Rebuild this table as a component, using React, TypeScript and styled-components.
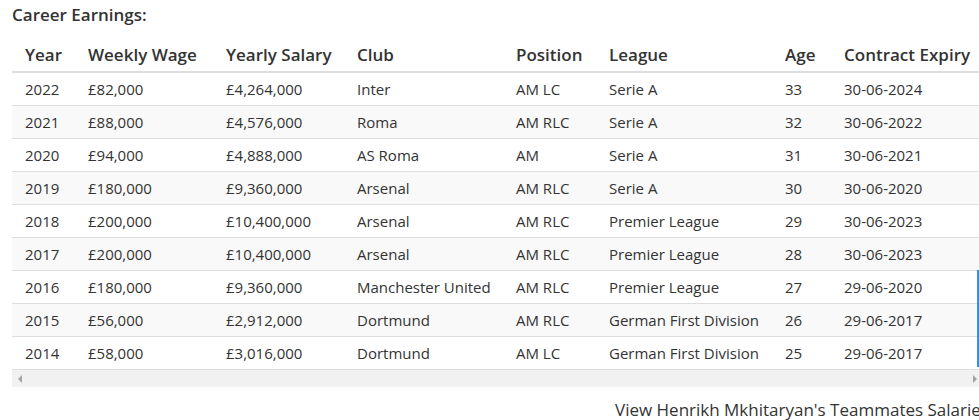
import React from "react";
import styled, { createGlobalStyle } from "styled-components";

const Global = createGlobalStyle`
  html, body { margin: 0; padding: 0; background: #fff; overflow: hidden; }
  body { font-family: "Open Sans", "Noto Sans", sans-serif; color: #333; }
`;

const Page = styled.div`
  width: 979px;
  height: 420px;
  overflow: hidden;
  padding-left: 12px;
  box-sizing: border-box;
`;

const Title = styled.h4`
  margin: 0;
  padding-top: 4px;
  font-size: 17px;
  font-weight: 600;
  line-height: 22px;
  color: #333;
`;

const ScrollArea = styled.div`
  position: relative;
  margin-top: 11px;
  width: 980px;
  overflow: hidden;
`;

const Table = styled.table`
  border-collapse: collapse;
  table-layout: fixed;
  width: 969px;
`;

const HeadCell = styled.th`
  text-align: left;
  font-size: 17px;
  font-weight: 600;
  height: 34px;
  padding: 0 0 0 13px;
  border-bottom: 2px solid #ddd;
  white-space: nowrap;
  vertical-align: middle;
`;

const Row = styled.tr<{ $striped: boolean }>`
  background: ${(p) => (p.$striped ? "#f9f9f9" : "#fff")};
`;

const Cell = styled.td`
  font-size: 15px;
  height: 32px;
  padding: 0 0 0 13px;
  border-bottom: 1px solid #ddd;
  white-space: nowrap;
  vertical-align: middle;
`;

const Scrollbar = styled.div`
  display: flex;
  justify-content: space-between;
  align-items: center;
  height: 17px;
  width: 968px;
  background: #f1f1f1;
  padding: 0 3px 0 6px;
  box-sizing: border-box;
`;

const Arrow = styled.span<{ $dir: "left" | "right" }>`
  width: 0;
  height: 0;
  border-top: 4px solid transparent;
  border-bottom: 4px solid transparent;
  ${(p) =>
    p.$dir === "left"
      ? "border-right: 4px solid #a3a3a3;"
      : "border-left: 4px solid #a3a3a3;"}
`;

const FocusLine = styled.div`
  position: absolute;
  left: 965px;
  top: 233px;
  width: 2px;
  height: 97px;
  background: #3b8fd8;
`;

const ViewLink = styled.div`
  margin-top: 10px;
  padding-left: 603px;
  font-size: 17px;
  line-height: 26px;
  white-space: nowrap;
  color: #333;
`;

const cols = [63, 138, 131, 159, 93, 176, 59, 150];
const headers = [
  "Year",
  "Weekly Wage",
  "Yearly Salary",
  "Club",
  "Position",
  "League",
  "Age",
  "Contract Expiry",
];

const rows: string[][] = [
  ["2022", "£82,000", "£4,264,000", "Inter", "AM LC", "Serie A", "33", "30-06-2024"],
  ["2021", "£88,000", "£4,576,000", "Roma", "AM RLC", "Serie A", "32", "30-06-2022"],
  ["2020", "£94,000", "£4,888,000", "AS Roma", "AM", "Serie A", "31", "30-06-2021"],
  ["2019", "£180,000", "£9,360,000", "Arsenal", "AM RLC", "Serie A", "30", "30-06-2020"],
  ["2018", "£200,000", "£10,400,000", "Arsenal", "AM RLC", "Premier League", "29", "30-06-2023"],
  ["2017", "£200,000", "£10,400,000", "Arsenal", "AM RLC", "Premier League", "28", "30-06-2023"],
  ["2016", "£180,000", "£9,360,000", "Manchester United", "AM RLC", "Premier League", "27", "29-06-2020"],
  ["2015", "£56,000", "£2,912,000", "Dortmund", "AM RLC", "German First Division", "26", "29-06-2017"],
  ["2014", "£58,000", "£3,016,000", "Dortmund", "AM LC", "German First Division", "25", "29-06-2017"],
];

export default function App() {
  return (
    <Page>
      <Global />
      <Title>Career Earnings:</Title>
      <ScrollArea>
        <Table>
          <colgroup>
            {cols.map((w, i) => (
              <col key={i} style={{ width: w }} />
            ))}
          </colgroup>
          <thead>
            <tr>
              {headers.map((h) => (
                <HeadCell key={h}>{h}</HeadCell>
              ))}
            </tr>
          </thead>
          <tbody>
            {rows.map((r, i) => (
              <Row key={r[0]} $striped={i % 2 === 1}>
                {r.map((c, j) => (
                  <Cell key={j}>{c}</Cell>
                ))}
              </Row>
            ))}
          </tbody>
        </Table>
        <Scrollbar>
          <Arrow $dir="left" />
          <Arrow $dir="right" />
        </Scrollbar>
        <FocusLine />
      </ScrollArea>
      <ViewLink>View Henrikh Mkhitaryan's Teammates Salaries</ViewLink>
    </Page>
  );
}
